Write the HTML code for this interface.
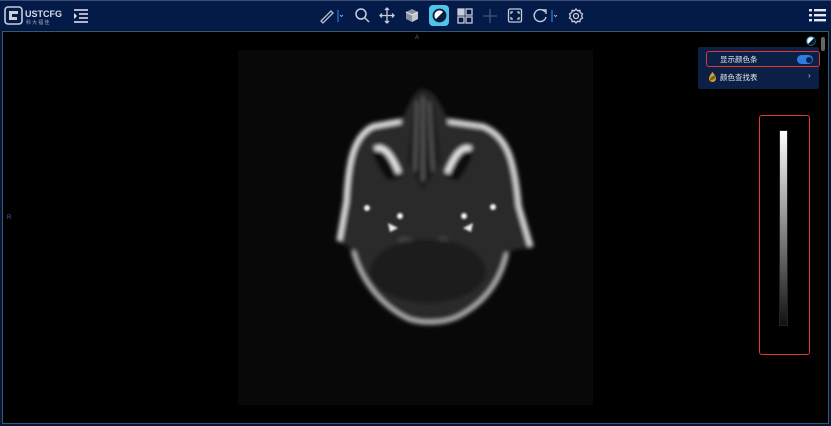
<!DOCTYPE html>
<html><head><meta charset="utf-8"><style>
*{margin:0;padding:0;box-sizing:border-box}
body{width:831px;height:426px;background:#0a1530;overflow:hidden;font-family:"Liberation Sans","Noto Sans CJK SC",sans-serif;position:relative}
.top{position:absolute;left:0;top:0;width:831px;height:29px;background:#041a48;border-top:1px solid #3a4d70}
.vp{position:absolute;left:2px;top:31px;width:827px;height:393px;background:#000;border:1px solid #2e5a80}
.ic{position:absolute;top:6px}
</style></head><body>
<div class="top">
 <svg class="ic" style="left:4px;top:5px" width="60" height="20" viewBox="0 0 60 20">
  <rect x="1" y="1" width="17" height="17" rx="3" fill="none" stroke="#c9ced8" stroke-width="1.6"/>
  <path d="M5 5h9v3H8v3h5v3H5z" fill="#c9ced8"/>
  <text x="21" y="11" font-size="9" font-weight="bold" fill="#d8dce4" font-family="Liberation Sans">USTCFG</text>
  <text x="22" y="18" font-size="5" fill="#aab" font-family="Noto Sans CJK SC">科 大 福 佳</text>
 </svg>
 <svg class="ic" style="left:73px;top:8px" width="16" height="14" viewBox="0 0 16 14" stroke="#e6e9ef" stroke-width="1.6">
  <path d="M1 1h14M6 5h9M6 9h9M1 13h14"/><path d="M1 4l3 3-3 3z" fill="#e6e9ef" stroke="none"/>
 </svg>
 <svg class="ic" style="left:318px" width="26" height="18" viewBox="0 0 26 18" fill="none" stroke="#b8bfcc" stroke-width="1.3">
  <path d="M3 14l10-10 2 2-10 10z"/><path d="M20 3v12" stroke="#2e70c0"/><path d="M22 8l1.5 1.5L25 8" stroke-width="0.8"/>
 </svg>
 <svg class="ic" style="left:354px" width="16" height="18" viewBox="0 0 16 18" fill="none" stroke="#c8cdd8" stroke-width="1.5"><circle cx="7" cy="7" r="5"/><path d="M11 11l4 4"/></svg>
 <svg class="ic" style="left:379px" width="16" height="18" viewBox="0 0 16 18" fill="none" stroke="#c8cdd8" stroke-width="1.3"><path d="M8 1v15M1 8.5h14M6 3l2-2 2 2M6 14l2 2 2-2M3 6.5l-2 2 2 2M13 6.5l2 2-2 2"/></svg>
 <svg class="ic" style="left:404px" width="16" height="18" viewBox="0 0 16 18"><path d="M8 2l6 3v7l-6 3-6-3V5z" fill="#8a92a2"/><path d="M8 8l6-3v7l-6 3z" fill="#c0c6d0"/><path d="M2 5l6 3 6-3" fill="none" stroke="#dfe3ea"/></svg>
 <div style="position:absolute;left:429px;top:4px;width:20px;height:21px;border-radius:4px;background:#4fc3e8"></div>
 <svg class="ic" style="left:432px;top:7px" width="15" height="15" viewBox="0 0 15 15"><circle cx="7.5" cy="7.5" r="6" fill="#fff" stroke="#081c40" stroke-width="1.8"/><path d="M12 3A6 6 0 0 1 3 12z" fill="#081c40"/></svg>
 <svg class="ic" style="left:457px" width="16" height="18" viewBox="0 0 16 18" fill="none" stroke="#c8cdd8" stroke-width="1.3"><rect x="1" y="2" width="6" height="6" fill="#c8cdd8"/><rect x="9" y="2" width="6" height="6"/><rect x="1" y="10" width="6" height="6"/><rect x="9" y="10" width="6" height="6"/></svg>
 <svg class="ic" style="left:482px" width="16" height="18" viewBox="0 0 16 18" stroke="#46587a" stroke-width="1.3"><path d="M8 2v14M1 9h14"/></svg>
 <svg class="ic" style="left:507px" width="16" height="18" viewBox="0 0 16 18" fill="none" stroke="#c8cdd8" stroke-width="1.3"><rect x="1.5" y="2" width="13" height="13" rx="1.5"/><path d="M4 7V5h2M10 5h2v2M12 10v2h-2M6 12H4v-2"/></svg>
 <svg class="ic" style="left:533px" width="28" height="18" viewBox="0 0 28 18" fill="none" stroke="#c8cdd8" stroke-width="1.4"><path d="M12 5A6 6 0 1 0 13 10"/><path d="M9 3h4v4"/><path d="M19 3v12" stroke="#2e70c0"/><path d="M21 8l1.5 1.5L24 8" stroke-width="0.8"/></svg>
 <svg class="ic" style="left:568px" width="16" height="18" viewBox="0 0 16 18" fill="none" stroke="#c8cdd8" stroke-width="1.3"><circle cx="8" cy="9" r="2.5"/><path d="M8 2l1.5 1.8 2.3-.5.5 2.3L14.5 7 13.6 9l.9 2-2.2 1.4-.5 2.3-2.3-.5L8 16l-1.5-1.8-2.3.5-.5-2.3L1.5 11l.9-2-.9-2 2.2-1.4.5-2.3 2.3.5z"/></svg>
 <svg class="ic" style="left:809px;top:8px" width="17" height="13" viewBox="0 0 17 13" fill="#e6e9ef"><rect x="0" y="0" width="3" height="2.4"/><rect x="5" y="0" width="12" height="2.4"/><rect x="0" y="5" width="3" height="2.4"/><rect x="5" y="5" width="12" height="2.4"/><rect x="0" y="10" width="3" height="2.4"/><rect x="5" y="10" width="12" height="2.4"/></svg>
</div>
<div class="vp">
 <div style="position:absolute;left:235px;top:18px;width:355px;height:355px;background:#080808"></div>
 <svg style="position:absolute;left:235px;top:18px" width="355" height="355" viewBox="235 49 355 355">
  <defs><filter id="b"><feGaussianBlur stdDeviation="2"/></filter><filter id="b2"><feGaussianBlur stdDeviation="1"/></filter></defs>
  <g filter="url(#b)">
   <path d="M420 88C410 90 404 110 398 120L370 125C350 135 345 160 343 200L336 240 348 248C355 275 375 300 405 318 415 322 440 322 455 316 480 305 500 280 506 250L528 246 516 205C512 160 505 135 480 125L445 120C440 108 432 90 420 88Z" fill="#2a2a2a"/>
   <path d="M398 120L370 125C350 135 345 160 343 200L336 240" fill="none" stroke="#e8e8e8" stroke-width="5"/>
   <path d="M445 120L480 125C505 135 512 160 516 205L528 246" fill="none" stroke="#e0e0e0" stroke-width="5"/>
   <path d="M350 250C358 280 378 305 405 318 418 323 440 323 455 316 482 302 498 280 504 252" fill="none" stroke="#bdbdbd" stroke-width="4"/>
   <path d="M412 100L420 90 430 100 438 160 420 190 404 160Z" fill="#1a1a1a"/>
   <path d="M414 100L412 170M426 100L430 170M420 95L420 180" fill="none" stroke="#6a6a6a" stroke-width="2"/>
   <path d="M370 150C385 145 392 160 400 175L385 180C378 170 372 162 370 150Z" fill="#0a0a0a"/>
   <path d="M470 150C455 145 448 160 440 175L455 180C462 170 468 162 470 150Z" fill="#0a0a0a"/>
   <path d="M372 148C382 143 390 158 396 172" fill="none" stroke="#eee" stroke-width="5"/>
   <path d="M468 148C458 143 450 158 444 172" fill="none" stroke="#eee" stroke-width="5"/>
   <path d="M395 240C410 232 420 250 420 265M445 240C432 232 425 250 425 265" fill="none" stroke="#4a4a4a" stroke-width="3"/>
   <ellipse cx="425" cy="270" rx="58" ry="32" fill="#1f1f1f"/>
  </g>
  <g filter="url(#b2)" fill="#f2f2f2">
   <circle cx="397" cy="215" r="3"/><circle cx="461" cy="215" r="3"/>
   <circle cx="364" cy="207" r="3"/><circle cx="490" cy="206" r="3"/>
   <path d="M385 222l10 5-8 4z"/><path d="M470 222l-10 5 8 4z"/>
  </g>
 </svg>
 <div style="position:absolute;left:412px;top:3px;font-size:6px;color:#3d6a9a">A</div>
 <div style="position:absolute;left:4px;top:183px;font-size:6px;color:#3d6a9a">R</div>
 <svg style="position:absolute;left:803px;top:4px" width="10" height="10" viewBox="0 0 10 10"><circle cx="5" cy="5" r="4" fill="#fff" stroke="#4fc3e8" stroke-width="1.2"/><path d="M8 2A4 4 0 0 1 2 8z" fill="#0a1a30"/></svg>
 <div style="position:absolute;left:818px;top:5px;width:4px;height:14px;border-radius:2px;background:#666"></div>
 <div style="position:absolute;left:695px;top:15px;width:121px;height:42px;background:#0b1f47;border-radius:2px"></div>
 <div style="position:absolute;left:703px;top:19px;width:114px;height:16px;border:1.5px solid #e0392a;border-radius:3px"></div>
 <div style="position:absolute;left:717px;top:22px;font-size:7.5px;color:#e8ecf2">显示颜色条</div>
 <div style="position:absolute;left:794px;top:23px;width:16px;height:9px;border-radius:5px;background:#2b7fe0"></div>
 <div style="position:absolute;left:803px;top:24.5px;width:6px;height:6px;border-radius:50%;background:#0b1f47"></div>
 <svg style="position:absolute;left:705px;top:40px" width="9" height="10" viewBox="0 0 9 10"><path d="M4.5 0C2 3 1 5 1 6.5A3.5 3.5 0 0 0 8 6.5C8 5 7 3 4.5 0Z" fill="#e0a020"/><path d="M2 6l4-3 1.5 3L3 9z" fill="#2a9a3a"/><path d="M2.5 7.5L7 5" stroke="#d02020" stroke-width="1.2"/></svg>
 <div style="position:absolute;left:717px;top:40px;font-size:7.5px;color:#e8ecf2">颜色查找表</div>
 <div style="position:absolute;left:805px;top:39px;font-size:8px;color:#bbc">›</div>
 <div style="position:absolute;left:756px;top:83px;width:51px;height:240px;border:1.5px solid #e0392a;border-radius:3px"></div>
 <div style="position:absolute;left:776px;top:98px;width:9px;height:196px;background:linear-gradient(#fff,#111);border:1px solid #222"></div>
</div>
</body></html>
